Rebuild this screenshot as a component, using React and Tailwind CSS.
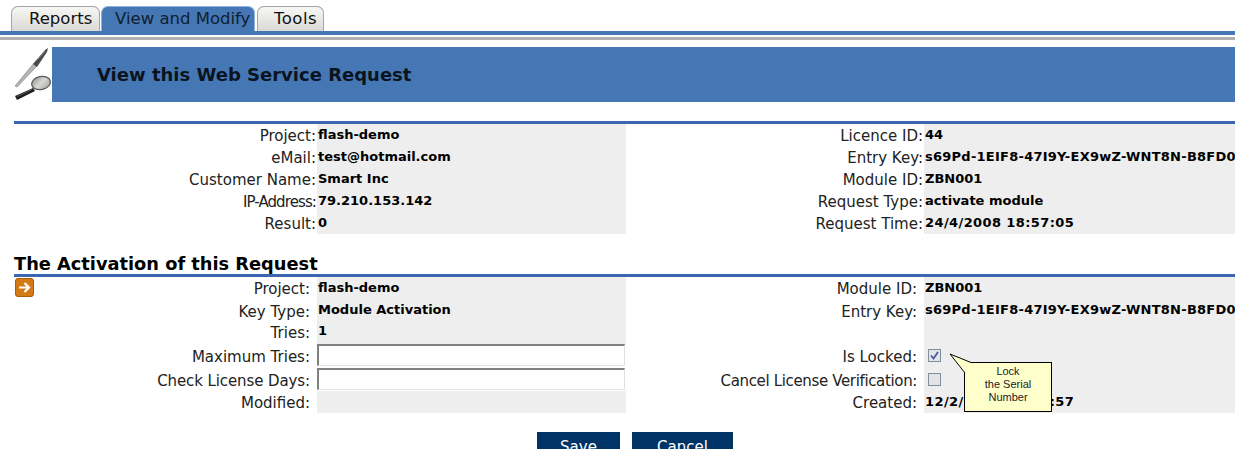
const font = { fontFamily: '"DejaVu Sans", Verdana, sans-serif' };

const requestLeft = [
  ["Project:", "flash-demo"],
  ["eMail:", "test@hotmail.com"],
  ["Customer Name:", "Smart Inc"],
  ["IP-Address:", "79.210.153.142", "", "tracking-[-0.9px]"],
  ["Result:", "0"],
];

const requestRight = [
  ["Licence ID:", "44"],
  ["Entry Key:", "s69Pd-1EIF8-47I9Y-EX9wZ-WNT8N-B8FD0", "tracking-[0.25px]"],
  ["Module ID:", "ZBN001"],
  ["Request Type:", "activate module"],
  ["Request Time:", "24/4/2008 18:57:05", "tracking-[0.4px]"],
];

const PenIcon = () => (
  <svg width="38" height="55" viewBox="0 0 38 55" className="shrink-0">
    <defs>
      <linearGradient id="lens" x1="0" y1="0" x2="1" y2="1">
        <stop offset="0" stopColor="#8a8a8a" />
        <stop offset="0.5" stopColor="#d8d8d6" />
        <stop offset="1" stopColor="#9c9c9c" />
      </linearGradient>
    </defs>
    {/* pen */}
    <path d="M1 39 L20 16 L23 19 L3 40 Z" fill="#b5b5b5" stroke="#6a6a6a" strokeWidth="0.5" />
    <path d="M19 17 L31 3 L34 1 L33 5 L23 20 Z" fill="#4a4a4a" />
    <path d="M24 12 L31 4" stroke="#9a9a9a" strokeWidth="0.8" />
    {/* magnifier */}
    <ellipse cx="27" cy="36" rx="9.5" ry="6.5" transform="rotate(-12 27 36)" fill="url(#lens)" stroke="#5a5a5a" strokeWidth="1.3" />
    <path d="M19 41 L1 49 L3 53 L21 44 Z" fill="#1d1d1d" />
    <path d="M18 42.5 L3 49.5" stroke="#777" strokeWidth="0.7" />
  </svg>
);

const ArrowIcon = () => (
  <svg width="19" height="19" viewBox="0 0 19 19" className="ml-px mt-px">
    <rect x="0.5" y="0.5" width="18" height="18" rx="2.5" fill="#d37a16" stroke="#a85c0c" />
    <path d="M4 9.5 H13 M9.5 5 L14 9.5 L9.5 14" fill="none" stroke="#fff" strokeWidth="2.2" />
  </svg>
);

const Tab = ({ label, active, className }) => (
  <div
    className={`flex h-[25px] items-center rounded-t-[7px] border border-b-0 text-[16.5px] ${className} ${
      active
        ? "border-[#8fb0d8] bg-[#4577b4] text-[#10202f]"
        : "border-[#a5a5a5] bg-gradient-to-b from-[#f7f7f5] to-[#d9d9d5] text-[#111]"
    }`}
  >
    {label}
  </div>
);

const InfoRows = ({ rows, labelWidth, valueWidth }) => (
  <div className="flex flex-col">
    {rows.map(([label, value, extra = "", labelExtra = ""]) => (
      <div key={label} className="flex h-[22px]">
        <div
          className={`pt-[2px] text-right text-[15px] leading-[20px] text-[#222] ${labelExtra}`}
          style={{ width: labelWidth }}
        >
          {label}
        </div>
        <div
          className={`ml-px overflow-hidden whitespace-nowrap bg-[#eeeeee] pl-px text-[13px] font-bold leading-[21px] text-black ${extra}`}
          style={{ width: valueWidth }}
        >
          {value}
        </div>
      </div>
    ))}
  </div>
);

const FormLabel = ({ children, className = "" }) => (
  <div className={`pr-[7px] pt-px text-right text-[15px] leading-[23px] text-[#222] ${className}`}>{children}</div>
);

const Value = ({ children, className = "" }) => (
  <div className={`overflow-hidden whitespace-nowrap bg-[#eeeeee] pl-px text-[13px] font-bold text-black ${className || "leading-[20px]"}`}>
    {children}
  </div>
);

const TextBox = () => (
  <div className="-mt-px h-[22px] w-[308px] border border-t-2 border-l-2 border-[#808080] border-b-[#e0e0e0] border-r-[#e0e0e0] bg-white" />
);

const CheckBox = ({ checked }) => (
  <div className="ml-[3px] mt-[4px] flex h-[13px] w-[13px] items-center justify-center border border-[#7f8f9f] bg-[#e4e4e4]">
    {checked && (
      <svg width="9" height="9" viewBox="0 0 9 9">
        <path d="M1 4.5 L3.5 7.5 L8 1" fill="none" stroke="#4a55a8" strokeWidth="1.7" />
      </svg>
    )}
  </div>
);

const Tooltip = () => (
  <div className="absolute left-[949px] top-[353px]">
    <div
      className="absolute left-[15px] top-[9px] flex h-[50px] w-[88px] flex-col items-center border border-black bg-[#ffffcc] pt-[2px] text-[11px] leading-[13px] text-[#222]"
      style={{ fontFamily: '"Liberation Sans", Arial, sans-serif' }}
    >
      <span>Lock</span>
      <span>the Serial</span>
      <span>Number</span>
    </div>
    <svg width="24" height="22" viewBox="0 0 24 22" className="absolute left-0 top-0">
      <path d="M16 20 L1 1 L22 9.5" fill="#ffffcc" stroke="#000" strokeWidth="1" />
    </svg>
  </div>
);

const App = () => {
  return (
    <div className="relative h-[449px] w-[1235px] overflow-hidden bg-white" style={font}>
      {/* TABS */}
      <div className="flex h-[31px] items-end pl-[11px]">
        <Tab label="Reports" className="w-[89px] pl-[17px]" />
        <Tab label="View and Modify" active className="ml-px w-[154px] pl-[13px]" />
        <Tab label="Tools" className="ml-[2px] w-[67px] pl-[16px] tracking-[0.5px]" />
      </div>
      <div className="h-[4px] bg-[#4577b4]" />
      <div className="mt-[2px] h-[3px] bg-[#b0b0b0]" />

      {/* BANNER */}
      <div className="mt-[7px] flex h-[55px] pl-[14px]">
        <PenIcon />
        <div className="flex flex-1 items-center bg-[#4577b4] pl-[45px] text-[18px] font-bold text-[#0a1420]">
          View this Web Service Request
        </div>
      </div>

      {/* REQUEST */}
      <div className="ml-[14px] mt-[19px] h-[3px] bg-[#3a66b2]" />
      <div className="ml-[14px] flex">
        <InfoRows rows={requestLeft} labelWidth={302} valueWidth={309} />
        <InfoRows rows={requestRight} labelWidth={297} valueWidth={311} />
      </div>

      {/* ACTIVATION */}
      <div className="ml-[14px] mt-[18px] h-[22px] whitespace-nowrap text-[17.8px] font-bold leading-[24px] text-black">
        The Activation of this Request
      </div>
      <div className="ml-[14px] h-[3px] bg-[#3a66b2]" />
      <div className="ml-[14px] grid grid-cols-[303px_309px_298px_311px] grid-rows-[23px_21px_24px_24px_22px_22px]">
        <div className="flex justify-between">
          <ArrowIcon />
          <FormLabel>Project:</FormLabel>
        </div>
        <Value className="leading-[21px]">flash-demo</Value>
        <FormLabel>Module ID:</FormLabel>
        <Value className="leading-[21px]">ZBN001</Value>

        <FormLabel>Key Type:</FormLabel>
        <Value className="leading-[19px]">Module Activation</Value>
        <FormLabel>Entry Key:</FormLabel>
        <Value className="leading-[19px] tracking-[0.25px]">s69Pd-1EIF8-47I9Y-EX9wZ-WNT8N-B8FD0</Value>

        <FormLabel>Tries:</FormLabel>
        <Value>1</Value>
        <FormLabel />
        <Value />

        <FormLabel>Maximum Tries:</FormLabel>
        <TextBox />
        <FormLabel>Is Locked:</FormLabel>
        <Value>
          <CheckBox checked />
        </Value>

        <FormLabel className="tracking-[-0.1px]">Check License Days:</FormLabel>
        <TextBox />
        <FormLabel className="tracking-[-0.35px]">Cancel License Verification:</FormLabel>
        <Value>
          <CheckBox />
        </Value>

        <FormLabel>Modified:</FormLabel>
        <Value />
        <FormLabel>Created:</FormLabel>
        <Value className="leading-[21px] tracking-[0.4px]">12/2/2008 18:57:57</Value>
      </div>

      {/* BUTTONS */}
      <div className="ml-[537px] mt-[19px] flex gap-[12px]">
        <div className="flex h-[30px] w-[83px] justify-center bg-[#003366] pt-[4px] text-[15px] text-white">Save</div>
        <div className="flex h-[30px] w-[101px] justify-center bg-[#003366] pt-[4px] text-[15px] text-white">Cancel</div>
      </div>

      <Tooltip />
    </div>
  );
};

export default App;
